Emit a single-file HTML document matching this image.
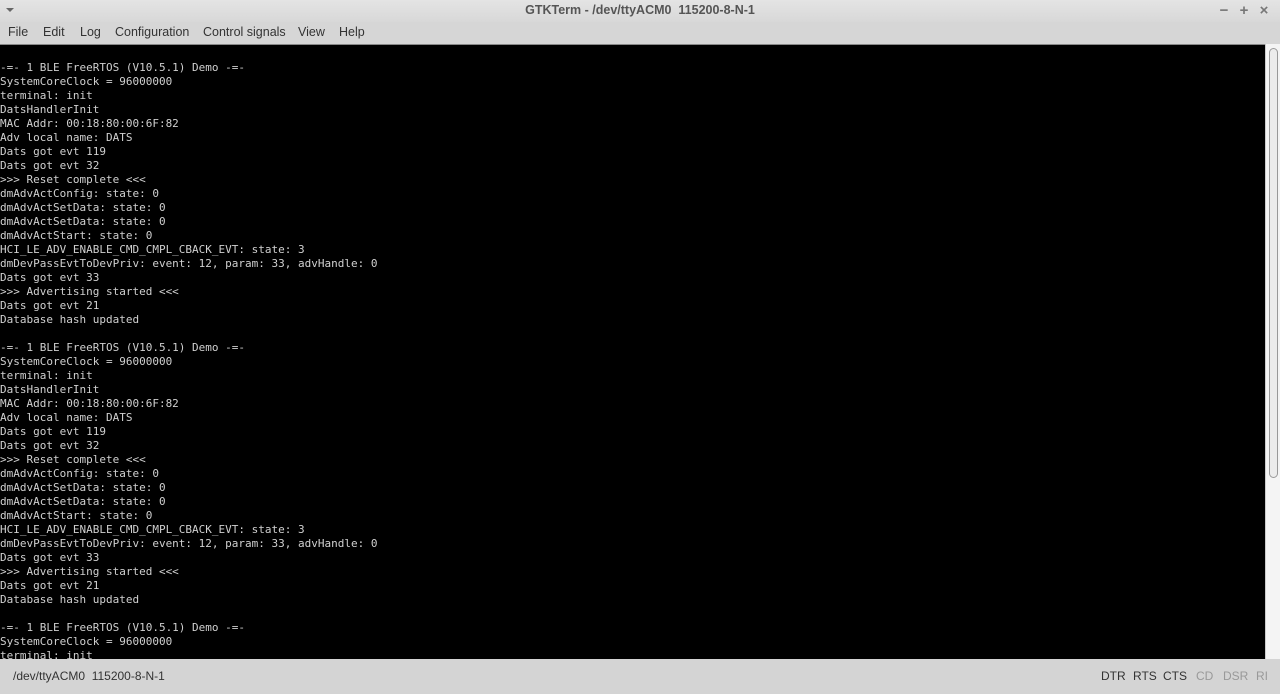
<!DOCTYPE html>
<html><head><meta charset="utf-8"><style>
*{margin:0;padding:0;box-sizing:border-box}
html,body{width:1280px;height:694px;overflow:hidden;background:#d4d4d4;font-family:"Liberation Sans","DejaVu Sans",sans-serif}
#title{position:absolute;left:0;top:0;width:1280px;height:22px;background:linear-gradient(#e4e4e4,#d8d8d8);color:#555;font-size:12.5px;font-weight:bold;text-align:center;line-height:21px}
#title .dd{position:absolute;left:6px;top:8px;width:0;height:0;border-left:4px solid transparent;border-right:4px solid transparent;border-top:4px solid #666}
#title .btns{position:absolute;right:6px;top:0;color:#777;font-size:15px;font-weight:bold;letter-spacing:0}
#title .btns span{display:inline-block;width:20px;text-align:center}
#menu{position:absolute;left:0;top:22px;width:1280px;height:22px;background:#d6d6d6;font-size:12.5px;color:#333;line-height:21px}
#menu span{position:absolute;top:0}
#term{position:absolute;left:0;top:44px;width:1265px;height:615px;background:#000;overflow:hidden;border-top:1px solid #888}
#term pre{font-family:"DejaVu Sans Mono","Liberation Mono",monospace;font-size:11px;line-height:14px;color:#d0d0d0;padding-top:2px}
#sb{position:absolute;left:1265px;top:44px;width:15px;height:615px;background:#f4f4f4;border-left:1px solid #ccc}
#sb .th{position:absolute;left:3px;top:4px;width:9px;height:430px;border:1px solid #999;border-radius:5px;background:#ececec}
#status{position:absolute;left:0;top:659px;width:1280px;height:35px;background:#d4d4d4;font-size:12px;color:#333;line-height:35px}
#status span{position:absolute;top:0}
.g{color:#999}
</style></head><body>
<div id="title"><div class="dd"></div>GTKTerm - /dev/ttyACM0&nbsp; 115200-8-N-1<div class="btns"><span>−</span><span>+</span><span>×</span></div></div>
<div id="menu"><span style="left:8px">File</span><span style="left:43px">Edit</span><span style="left:80px">Log</span><span style="left:115px">Configuration</span><span style="left:203px">Control signals</span><span style="left:298px">View</span><span style="left:339px">Help</span></div>
<div id="term"><pre>

-=- 1 BLE FreeRTOS (V10.5.1) Demo -=-
SystemCoreClock = 96000000
terminal: init
DatsHandlerInit
MAC Addr: 00:18:80:00:6F:82
Adv local name: DATS
Dats got evt 119
Dats got evt 32
>>> Reset complete <<<
dmAdvActConfig: state: 0
dmAdvActSetData: state: 0
dmAdvActSetData: state: 0
dmAdvActStart: state: 0
HCI_LE_ADV_ENABLE_CMD_CMPL_CBACK_EVT: state: 3
dmDevPassEvtToDevPriv: event: 12, param: 33, advHandle: 0
Dats got evt 33
>>> Advertising started <<<
Dats got evt 21
Database hash updated

-=- 1 BLE FreeRTOS (V10.5.1) Demo -=-
SystemCoreClock = 96000000
terminal: init
DatsHandlerInit
MAC Addr: 00:18:80:00:6F:82
Adv local name: DATS
Dats got evt 119
Dats got evt 32
>>> Reset complete <<<
dmAdvActConfig: state: 0
dmAdvActSetData: state: 0
dmAdvActSetData: state: 0
dmAdvActStart: state: 0
HCI_LE_ADV_ENABLE_CMD_CMPL_CBACK_EVT: state: 3
dmDevPassEvtToDevPriv: event: 12, param: 33, advHandle: 0
Dats got evt 33
>>> Advertising started <<<
Dats got evt 21
Database hash updated

-=- 1 BLE FreeRTOS (V10.5.1) Demo -=-
SystemCoreClock = 96000000
terminal: init
</pre></div>
<div id="sb"><div class="th"></div></div>
<div id="status"><span style="left:13px">/dev/ttyACM0&nbsp; 115200-8-N-1</span><span style="left:1101px">DTR</span><span style="left:1133px">RTS</span><span style="left:1163px">CTS</span><span class="g" style="left:1196px">CD</span><span class="g" style="left:1223px">DSR</span><span class="g" style="left:1256px">RI</span></div>
</body></html>
